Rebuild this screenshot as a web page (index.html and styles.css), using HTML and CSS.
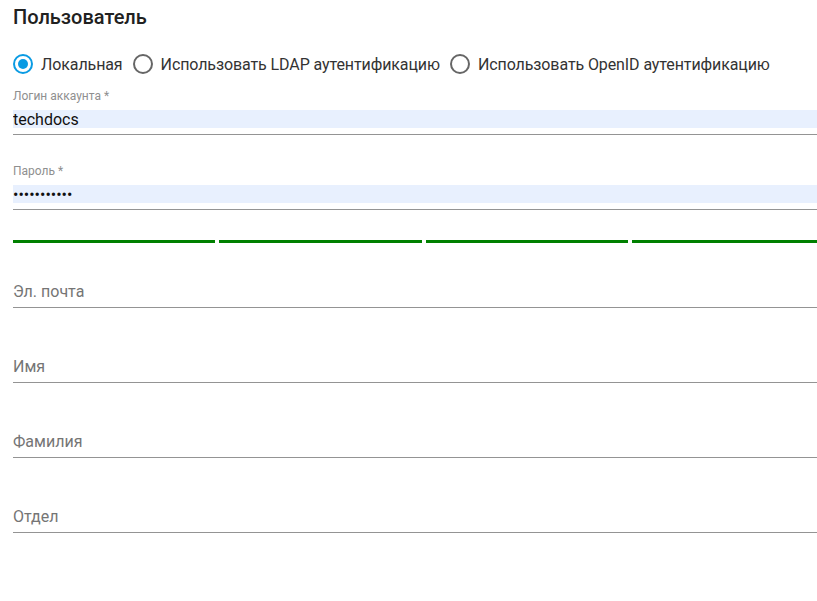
FILE: index.html
```html
<!DOCTYPE html>
<html lang="ru">
<head>
    <meta charset="UTF-8">
    <meta name="viewport" content="width=device-width, initial-scale=1.0">
    <title>Пользователь</title>
    <link rel="stylesheet" href="styles.css">
</head>
<body>
    <h1>Пользователь</h1>
    <div class="auth-types">
        <label class="radio">
            <input type="radio" name="auth" value="local" checked>
            <span class="mark"></span>
            Локальная
        </label>
        <label class="radio">
            <input type="radio" name="auth" value="ldap">
            <span class="mark"></span>
            Использовать LDAP аутентификацию
        </label>
        <label class="radio">
            <input type="radio" name="auth" value="openid">
            <span class="mark"></span>
            Использовать OpenID аутентификацию
        </label>
    </div>
    <div class="form">
        <div class="field filled">
            <label for="login">Логин аккаунта *</label>
            <input id="login" type="text" value="techdocs">
        </div>
        <div class="field filled">
            <label for="password">Пароль *</label>
            <input id="password" type="password" value="techdocs123">
        </div>
        <div class="strength">
            <div class="bar"></div>
            <div class="bar"></div>
            <div class="bar"></div>
            <div class="bar"></div>
        </div>
        <div class="field">
            <input type="email" placeholder="Эл. почта">
        </div>
        <div class="field">
            <input type="text" placeholder="Имя">
        </div>
        <div class="field">
            <input type="text" placeholder="Фамилия">
        </div>
        <div class="field">
            <input type="text" placeholder="Отдел">
        </div>
    </div>
</body>
</html>
```

FILE: styles.css
```css
body {
    font-family: Roboto, 'Liberation Sans', sans-serif;
    margin: 0;
    padding: 0 0 0 13px;
    background: #fff;
    color: #222;
    overflow-x: hidden;
}
h1 {
    font-size: 20px;
    font-weight: 500;
    line-height: 24px;
    margin: 5px 0 0;
    color: #212121;
}
.auth-types {
    display: flex;
    align-items: center;
    gap: 10px;
    margin-top: 23px;
    height: 24px;
}
.radio {
    display: flex;
    align-items: center;
    gap: 8px;
    font-size: 16px;
    letter-spacing: -0.1px;
    color: #333;
    cursor: pointer;
}
.radio input {
    display: none;
}
.radio .mark {
    width: 20px;
    height: 20px;
    box-sizing: border-box;
    border: 2px solid #666;
    border-radius: 50%;
    display: flex;
    align-items: center;
    justify-content: center;
}
.radio input:checked + .mark {
    border-color: #0a9be3;
}
.radio input:checked + .mark::after {
    content: '';
    width: 10px;
    height: 10px;
    border-radius: 50%;
    background: #0a9be3;
}
.form {
    display: flex;
    flex-direction: column;
    width: 821px;
}
.field {
    display: flex;
    flex-direction: column;
    border-bottom: 1px solid #949494;
    padding: 21px 0 6px;
    margin-top: 28px;
}
.field.filled {
    padding-top: 0;
    margin-top: 29px;
}
.field.filled:first-child {
    margin-top: 13px;
}
.strength + .field {
    margin-top: 18px;
}
.field label {
    font-size: 12px;
    line-height: 14px;
    color: #8f8f8f;
    margin-bottom: 7px;
}
.field input {
    font-family: inherit;
    font-size: 16px;
    height: 19px;
    border: 0;
    padding: 0;
    margin: 0;
    outline: none;
    color: #111;
    background: transparent;
}
.field.filled input {
    height: 18px;
    background: #e8f0fe;
}
.field input::placeholder {
    color: #757575;
}
.strength {
    display: flex;
    gap: 4px;
    margin-top: 30px;
}
.strength .bar {
    flex: 1;
    height: 3px;
    background: #008000;
}
```
